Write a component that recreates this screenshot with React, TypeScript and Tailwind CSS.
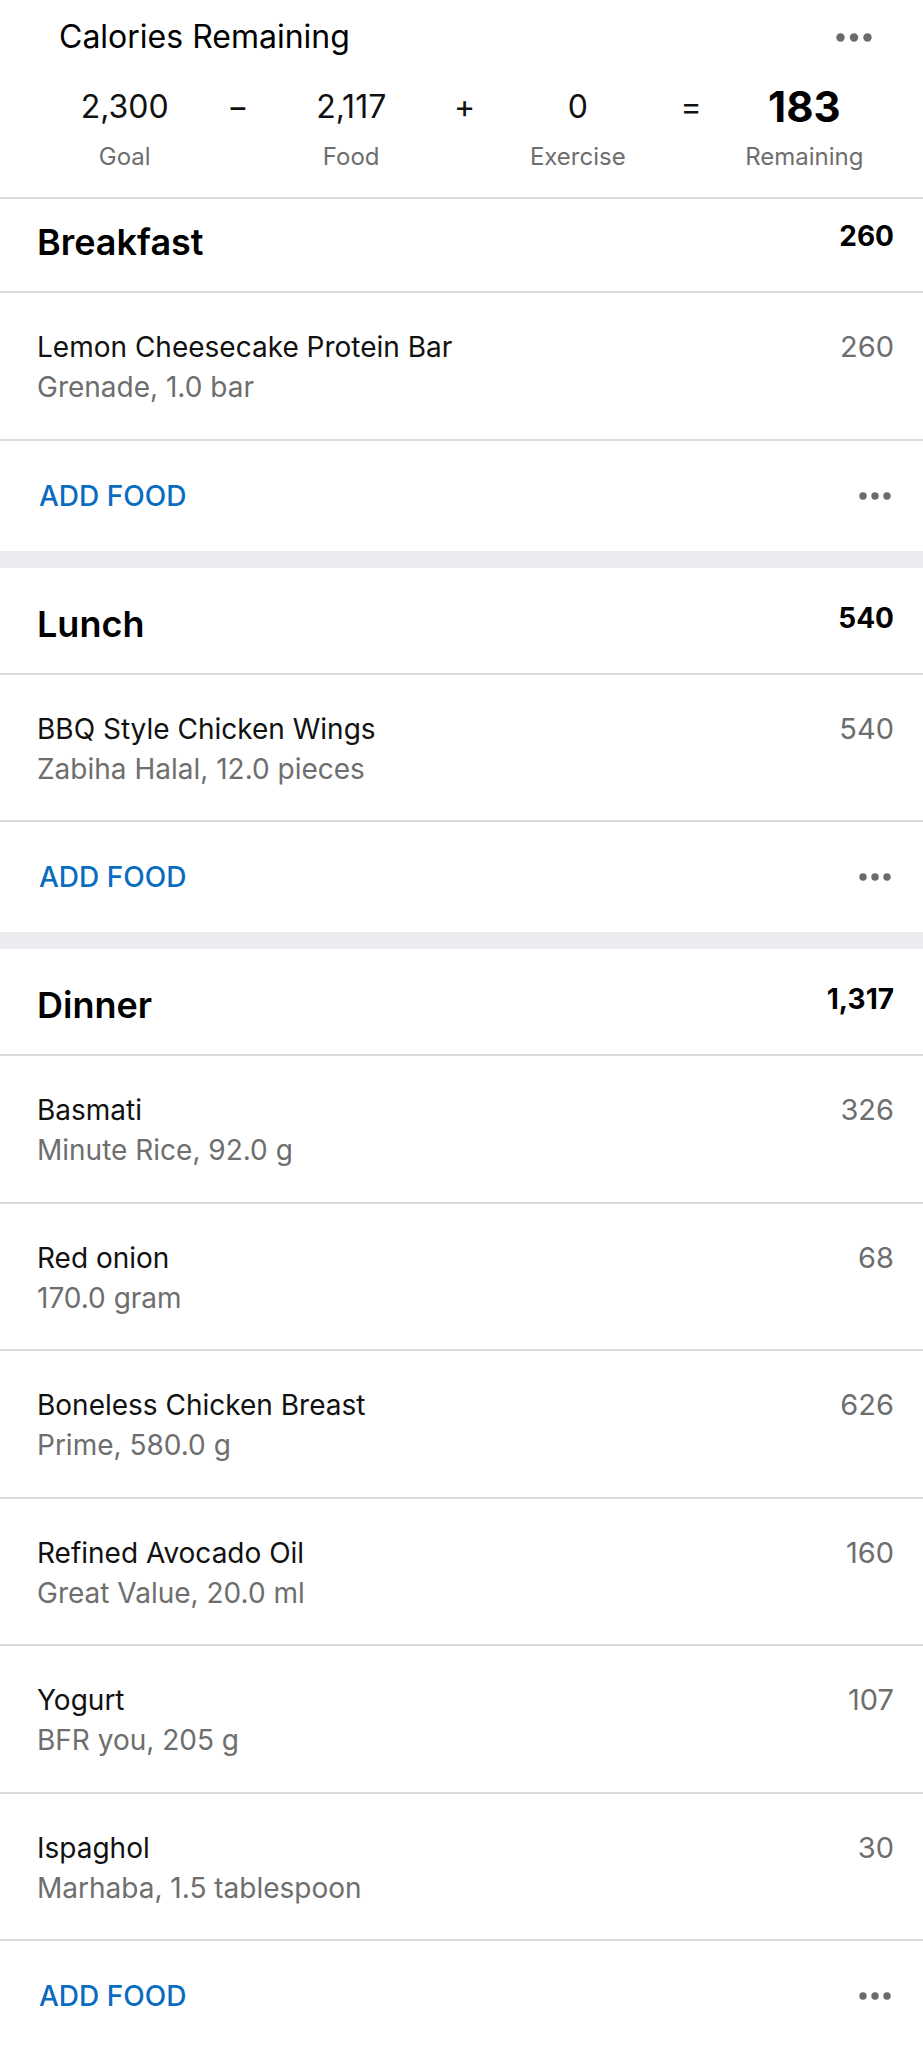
import React from "react";

type Food = { name: string; detail: string; cal: string };

type Meal = { title: string; total: string; foods: Food[]; clipped?: boolean };

const meals: Meal[] = [
  {
    title: "Breakfast",
    total: "260",
    clipped: true,
    foods: [{ name: "Lemon Cheesecake Protein Bar", detail: "Grenade, 1.0 bar", cal: "260" }],
  },
  {
    title: "Lunch",
    total: "540",
    foods: [{ name: "BBQ Style Chicken Wings", detail: "Zabiha Halal, 12.0 pieces", cal: "540" }],
  },
  {
    title: "Dinner",
    total: "1,317",
    foods: [
      { name: "Basmati", detail: "Minute Rice, 92.0 g", cal: "326" },
      { name: "Red onion", detail: "170.0 gram", cal: "68" },
      { name: "Boneless Chicken Breast", detail: "Prime, 580.0 g", cal: "626" },
      { name: "Refined Avocado Oil", detail: "Great Value, 20.0 ml", cal: "160" },
      { name: "Yogurt", detail: "BFR you, 205 g", cal: "107" },
      { name: "Ispaghol", detail: "Marhaba, 1.5 tablespoon", cal: "30" },
    ],
  },
];

function Dots({ size = 9 }: { size?: number }) {
  const gap = size * 1.5;
  return (
    <svg width={size + gap * 2} height={size} viewBox={`0 0 ${size + gap * 2} ${size}`} className="block">
      {[0, 1, 2].map((i) => (
        <circle key={i} cx={size / 2 + i * gap} cy={size / 2} r={size / 2 - 0.3} fill="#6b6b6b" />
      ))}
    </svg>
  );
}

function Summary() {
  const cols = [
    { v: "2,300", l: "Goal" },
    { v: "−" },
    { v: "2,117", l: "Food" },
    { v: "+" },
    { v: "0", l: "Exercise" },
    { v: "=" },
    { v: "183", l: "Remaining", bold: true },
  ];
  return (
    <div className="h-[199px] border-b-2 border-[#dadada] bg-white">
      <div className="flex h-[74px] items-center justify-between pl-[59px] pr-[51px]">
        <span className="text-[32px] leading-[36px] text-black">Calories Remaining</span>
        <Dots />
      </div>
      <div className="mt-[13px] grid grid-cols-7 pl-[68px] pr-[62px]">
        {cols.map((c, i) => (
          <div key={i} className="flex flex-col items-center">
            <span
              className={
                c.bold
                  ? "text-[42px] font-bold leading-[40px] text-black"
                  : "text-[32px] leading-[40px] text-[#111]"
              }
            >
              {c.v}
            </span>
            {c.l && <span className="mt-[15px] text-[24px] leading-[30px] text-[#6e6e6e]">{c.l}</span>}
          </div>
        ))}
      </div>
    </div>
  );
}

function MealSection({ meal, last }: { meal: Meal; last: boolean }) {
  return (
    <section className="bg-white">
      <div
        className={
          (meal.clipped ? "h-[94px]" : "h-[107px]") +
          " flex items-end justify-between border-b-2 border-[#dadada] pb-[29px] pl-[37px] pr-[29px]"
        }
      >
        <span className="text-[36px] font-semibold leading-[40px] text-black">{meal.title}</span>
        <span className="mb-[9px] text-[28px] font-bold leading-[34px] text-black">{meal.total}</span>
      </div>
      {meal.foods.map((f, i) => (
        <div
          key={i}
          className="flex h-[147.5px] items-start justify-between border-b-2 border-[#dadada] pl-[37px] pr-[29px] pt-[34px]"
        >
          <div className="flex flex-col">
            <span className="text-[28px] leading-[40px] text-[#111]">{f.name}</span>
            <span className="text-[28px] leading-[40px] text-[#6e6e6e]">{f.detail}</span>
          </div>
          <span className="text-[29px] leading-[40px] text-[#6e6e6e]">{f.cal}</span>
        </div>
      ))}
      <div className="flex h-[110px] items-center justify-between pl-[39px] pr-[32px]">
        <span className="text-[28px] font-medium leading-[34px] text-[#0a6cbf]">ADD FOOD</span>
        <Dots size={8} />
      </div>
      {!last && <div className="h-[17px] bg-[#ebebf0]" />}
    </section>
  );
}

export default function App() {
  return (
    <div className="min-h-screen w-full bg-white font-['Inter','Noto_Sans',sans-serif]">
      <Summary />
      {meals.map((m, i) => (
        <MealSection key={m.title} meal={m} last={i === meals.length - 1} />
      ))}
    </div>
  );
}
